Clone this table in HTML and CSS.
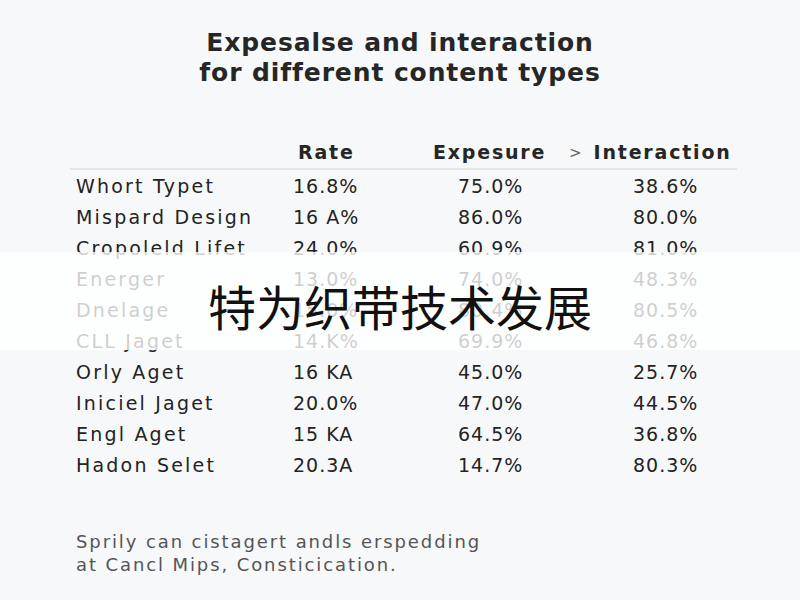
FILE: index.html
```html
<!DOCTYPE html>
<html>
<head>
<meta charset="utf-8">
<link rel="stylesheet" href="styles.css">
</head>
<body>
<div class="page">
  <h1 class="title">Expesalse and interaction<br>for different content types</h1>
  <div class="table">
    <div class="row head">
      <div class="c label"></div>
      <div class="c rate">Rate</div>
      <div class="c exp">Expesure</div>
      <div class="c int"><span class="chev">&gt;</span>Interaction</div>
    </div>
    <div class="row"><div class="c label">Whort Typet</div><div class="c rate">16.8%</div><div class="c exp">75.0%</div><div class="c int">38.6%</div></div>
    <div class="row"><div class="c label">Mispard Design</div><div class="c rate">16 A%</div><div class="c exp">86.0%</div><div class="c int">80.0%</div></div>
    <div class="row"><div class="c label">Cropoleld Lifet</div><div class="c rate">24.0%</div><div class="c exp">60.9%</div><div class="c int">81.0%</div></div>
    <div class="row"><div class="c label">Energer</div><div class="c rate">13.0%</div><div class="c exp">74.0%</div><div class="c int">48.3%</div></div>
    <div class="row"><div class="c label">Dnelage</div><div class="c rate">15.0%</div><div class="c exp">80.4%</div><div class="c int">80.5%</div></div>
    <div class="row"><div class="c label">CLL Jaget</div><div class="c rate">14.K%</div><div class="c exp">69.9%</div><div class="c int">46.8%</div></div>
    <div class="row"><div class="c label">Orly Aget</div><div class="c rate">16 KA</div><div class="c exp">45.0%</div><div class="c int">25.7%</div></div>
    <div class="row"><div class="c label">Iniciel Jaget</div><div class="c rate">20.0%</div><div class="c exp">47.0%</div><div class="c int">44.5%</div></div>
    <div class="row"><div class="c label">Engl Aget</div><div class="c rate">15 KA</div><div class="c exp">64.5%</div><div class="c int">36.8%</div></div>
    <div class="row"><div class="c label">Hadon Selet</div><div class="c rate">20.3A</div><div class="c exp">14.7%</div><div class="c int">80.3%</div></div>
  </div>
  <p class="note">Sprily can cistagert andls erspedding<br>at Cancl Mips, Consticication.</p>
</div>
<div class="band"><span class="band-text">特为织带技术发展</span></div>
</body>
</html>
```
FILE: styles.css
```css
* { box-sizing: border-box; }
html, body { margin: 0; padding: 0; }
body {
  width: 800px;
  height: 600px;
  background: #f7f8fa;
  font-family: "DejaVu Sans", "Liberation Sans", sans-serif;
  color: #222;
  overflow: hidden;
  position: relative;
}
.page {
  padding: 28px 0 0 0;
  display: flex;
  flex-direction: column;
}
.title {
  margin: 0;
  text-align: center;
  font-size: 25px;
  line-height: 30px;
  font-weight: 700;
  letter-spacing: 0.9px;
  color: #262626;
}
.table {
  margin: 48px 63px 0 70px;
  display: flex;
  flex-direction: column;
}
.row {
  display: grid;
  grid-template-columns: 223px 165px 175px 1fr;
  height: 31px;
  align-items: center;
  font-size: 19px;
  letter-spacing: 1px;
  color: #232323;
  white-space: nowrap;
}
.row .label { padding-left: 6px; letter-spacing: 2.2px; }
.head {
  font-weight: 700;
  font-size: 19px;
  letter-spacing: 1.8px;
  height: 34px;
  border-bottom: 2px solid #e4e6ea;
  color: #262626;
}
.head .rate { padding-left: 5px; }
.head .exp { margin-left: -25px; }
.head .int { margin-left: -64px; }
.chev { font-weight: 400; color: #666; font-size: 15px; margin-right: 12px; position: relative; top: -1px; letter-spacing: 0; }
.note {
  margin: 50px 0 0 76px;
  font-size: 18px;
  line-height: 23px;
  letter-spacing: 1.9px;
  color: #555;
}
.band {
  position: absolute;
  left: 0;
  top: 252px;
  width: 800px;
  height: 98px;
  background: rgba(255, 255, 255, 0.78);
  display: flex;
  align-items: center;
  justify-content: center;
}
.band-text {
  font-family: "Noto Sans CJK SC", sans-serif;
  font-size: 48px;
  font-weight: 400;
  color: #111;
  margin-top: 8px;
}
```
